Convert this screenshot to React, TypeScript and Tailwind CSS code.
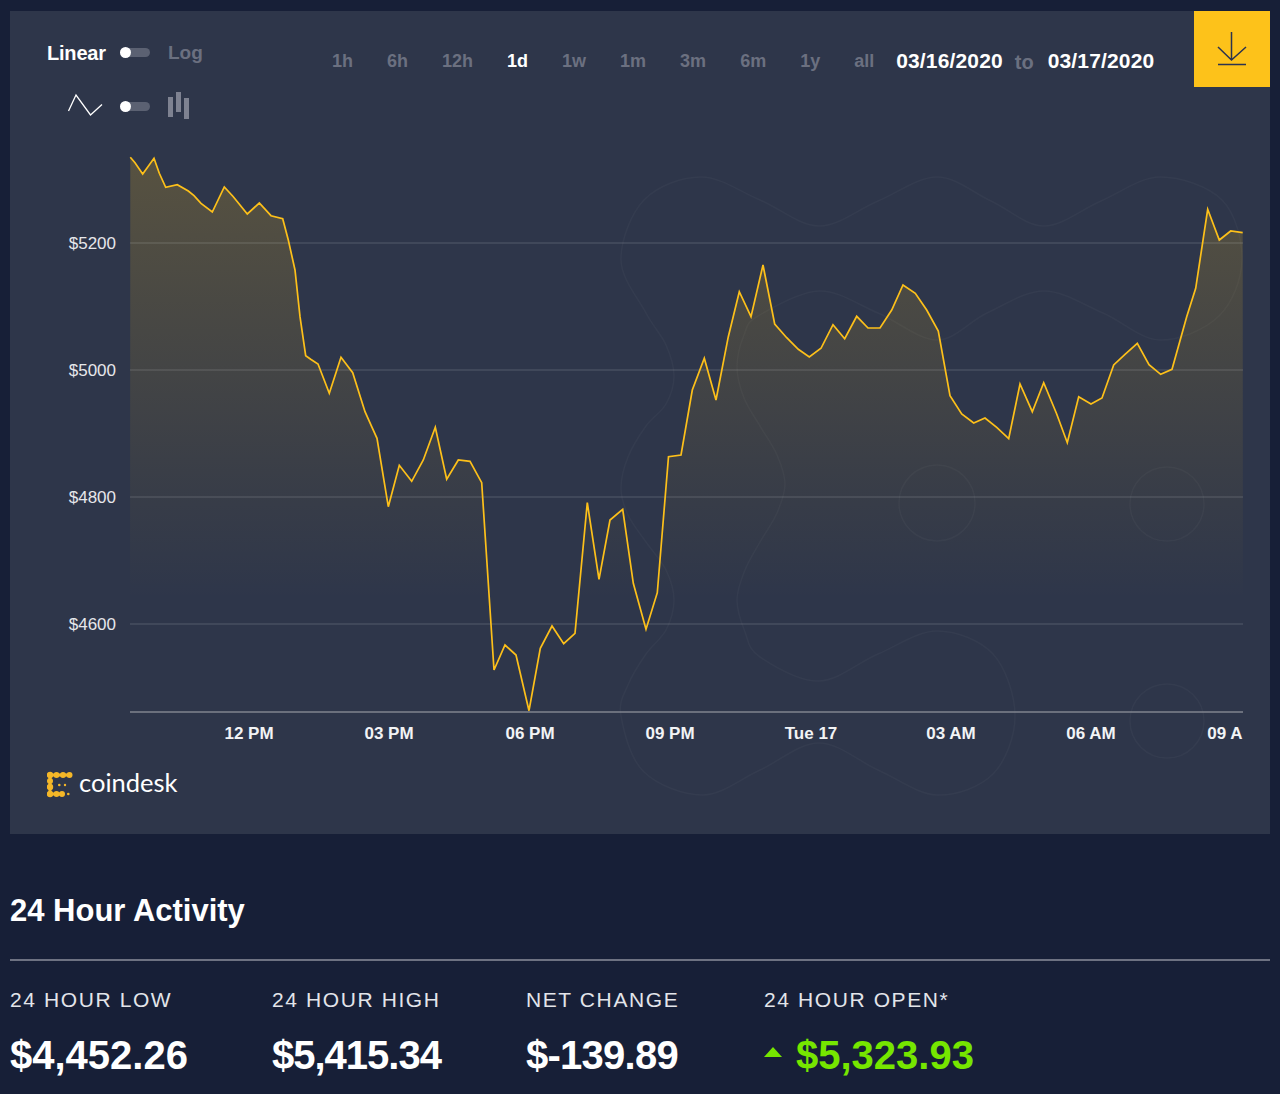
import React from "react";

const sans = "font-['Liberation_Sans',Arial,sans-serif]";

// price line, in page pixels (the svg viewBox starts at the page position of the chart)
const PRICE: [number, number][] = [
  [130.3, 157.3], [135, 162.7], [142.7, 174], [154, 158.3], [159.3, 173.3], [165.7, 187.3], [177.3, 184.7],
  [188.3, 191], [194, 195.7], [201, 203.3], [212.3, 212], [224.3, 187], [233.3, 196.7], [247.3, 214],
  [259.3, 203], [271, 215.7], [282.7, 218.7], [288.3, 240], [295, 270], [300, 316.7], [305.7, 355.7],
  [310.7, 359.3], [318, 364], [329.3, 393.3], [341, 357.3], [352.7, 372.7], [365, 411.7], [371.7, 426.7],
  [377, 438.3], [388.3, 506.7], [399.3, 465.3], [411.7, 481.3], [423.3, 460], [435.3, 427.3], [446.7, 479.3],
  [458.3, 460], [470, 461.3], [481.7, 482.7], [494, 670], [505, 645], [516, 655], [529, 710.7], [540.3, 648.3],
  [552, 626], [563.7, 643.7], [575, 633.3], [587.3, 502.7], [599, 579.3], [610, 520], [622.7, 509.3],
  [633.3, 583.3], [646, 629.3], [657.3, 592.7], [668.5, 456.7], [681, 455], [692.3, 390], [704.3, 358.3],
  [716, 400], [728.3, 336.7], [739.3, 291.7], [751, 316.7], [763, 265], [774.7, 324], [786.7, 337.7],
  [798.3, 349.3], [809.3, 357], [821, 348.3], [833, 324.7], [844.7, 338.7], [856.7, 316.3], [868, 328],
  [880, 328], [891.7, 310], [903, 285], [915.3, 293.3], [926.7, 310], [938.3, 331], [950, 395.7],
  [961.7, 414], [973.7, 423], [985, 418], [996.7, 427.3], [1008.7, 438.7], [1020, 384], [1032.3, 411.7],
  [1043.7, 382.7], [1056.7, 414], [1067.3, 442.7], [1078.7, 396.7], [1091, 404], [1102, 398], [1113.7, 365],
  [1125, 354.3], [1137.3, 343.3], [1149, 364.7], [1160.7, 374.3], [1172, 369.3], [1186.7, 316.7],
  [1195.7, 288.3], [1207.7, 209.3], [1219.3, 240], [1230.7, 231], [1242.7, 232.7],
];

// outline of the faint blobs behind the chart
const BLOB: [number, number][] = [
  [621, 260], [644, 200], [701, 177], [760, 200], [819, 226], [878, 201], [937, 177], [991, 201], [1044, 226],
  [1101, 201], [1160, 177], [1222, 200], [1242, 260], [1219, 316], [1160, 340], [1103, 313], [1044, 291],
  [987, 313], [937, 340], [878, 313], [819, 291], [758, 316], [744, 335], [737, 367], [744, 398], [760, 426],
  [777, 455], [785, 484], [777, 513], [760, 542], [745, 570], [737, 600], [745, 632], [760, 657], [819, 681],
  [878, 654], [937, 631], [993, 654], [1015, 716], [993, 774], [937, 795], [878, 770], [819, 743], [760, 770],
  [703, 795], [644, 772], [621, 716], [628, 685], [646, 654], [666, 630], [674, 600], [666, 570], [646, 542],
  [628, 515], [621, 488], [628, 457], [646, 426], [666, 404], [674, 376], [666, 345], [646, 313],
];

const RANGES = ["1h", "6h", "12h", "1d", "1w", "1m", "3m", "6m", "1y", "all"];
const GRID = [
  { y: 243, label: "$5200" },
  { y: 370, label: "$5000" },
  { y: 497, label: "$4800" },
  { y: 624, label: "$4600" },
];
const TIMES = [
  { x: 249, label: "12 PM" },
  { x: 389, label: "03 PM" },
  { x: 530, label: "06 PM" },
  { x: 670, label: "09 PM" },
  { x: 811, label: "Tue 17" },
  { x: 951, label: "03 AM" },
  { x: 1091, label: "06 AM" },
  { x: 1225, label: "09 A" },
];
const STATS = [
  { label: "24 HOUR LOW", value: "$4,452.26", track: "" },
  { label: "24 HOUR HIGH", value: "$5,415.34", track: "tracking-[-1px]" },
  { label: "NET CHANGE", value: "$-139.89", track: "tracking-[-0.75px]" },
];

function smoothLoop(pts: [number, number][]) {
  const n = pts.length;
  let d = `M${pts[0][0]} ${pts[0][1]}`;
  for (let i = 0; i < n; i++) {
    const p0 = pts[(i - 1 + n) % n];
    const p1 = pts[i];
    const p2 = pts[(i + 1) % n];
    const p3 = pts[(i + 2) % n];
    const c1x = p1[0] + (p2[0] - p0[0]) / 6;
    const c1y = p1[1] + (p2[1] - p0[1]) / 6;
    const c2x = p2[0] - (p3[0] - p1[0]) / 6;
    const c2y = p2[1] - (p3[1] - p1[1]) / 6;
    d += `C${c1x} ${c1y} ${c2x} ${c2y} ${p2[0]} ${p2[1]}`;
  }
  return d + "Z";
}

function Toggle({ className = "" }: { className?: string }) {
  return (
    <div className={`relative w-[30px] h-[9px] ${className}`}>
      <div className="ml-[3px] h-[9px] rounded-full bg-[#5b6172]" />
      <div className="absolute left-0 top-[-1px] w-[11px] h-[11px] rounded-full bg-white" />
    </div>
  );
}

function Chart() {
  const line = PRICE.map((p) => p.join(",")).join(" ");
  const area = `130,712 ${line} 1243,712`;
  return (
    <svg className="block w-[1260px] h-[703px]" viewBox="10 131 1260 703" fill="none">
      <defs>
        <linearGradient id="priceFill" gradientUnits="userSpaceOnUse" x1="0" y1="157" x2="0" y2="600">
          <stop offset="0" stopColor="#fdc21a" stopOpacity="0.2" />
          <stop offset="1" stopColor="#fdc21a" stopOpacity="0" />
        </linearGradient>
      </defs>
      <path d={smoothLoop(BLOB)} stroke="#ffffff" strokeOpacity="0.03" strokeWidth="1.5" />
      <circle cx="937" cy="503" r="38" stroke="#ffffff" strokeOpacity="0.03" strokeWidth="1.5" />
      <circle cx="1167" cy="504" r="37" stroke="#ffffff" strokeOpacity="0.03" strokeWidth="1.5" />
      <circle cx="1167" cy="721" r="37" stroke="#ffffff" strokeOpacity="0.03" strokeWidth="1.5" />
      <polygon points={area} fill="url(#priceFill)" />
      {GRID.map((g) => (
        <g key={g.y}>
          <line x1="130" x2="1243" y1={g.y} y2={g.y} stroke="#ffffff" strokeOpacity="0.12" strokeWidth="1.5" />
          <text x="116" y={g.y + 6} textAnchor="end" className={`${sans} text-[17px] fill-[#e6e7ea]`}>
            {g.label}
          </text>
        </g>
      ))}
      <line x1="130" x2="1243" y1="712" y2="712" stroke="#81848f" strokeWidth="1.5" />
      <polyline points={line} stroke="#fdc01a" strokeWidth="1.7" strokeLinejoin="miter" />
      {TIMES.map((t) => (
        <text key={t.label} x={t.x} y="739" textAnchor="middle" className={`${sans} text-[17px] font-bold fill-[#f2f3f5]`}>
          {t.label}
        </text>
      ))}
    </svg>
  );
}

function Logo() {
  return (
    <div className="absolute left-[37px] bottom-[36px] flex items-center gap-[6px]">
      <svg className="w-[26px] h-[28px]" viewBox="0 0 26 28" fill="#f4b728">
        <path d="M3 5H22.5M3 5V24M3 24H15" stroke="#f4b728" strokeWidth="3" />
        <circle cx="3" cy="5" r="3.2" />
        <circle cx="9.5" cy="5" r="3" />
        <circle cx="16" cy="5" r="3" />
        <circle cx="22.5" cy="5" r="3" />
        <circle cx="3" cy="11" r="3" />
        <circle cx="3" cy="17" r="3.2" />
        <circle cx="3" cy="24" r="3.2" />
        <circle cx="9.5" cy="24" r="3" />
        <circle cx="15" cy="24" r="3" />
        <circle cx="12.3" cy="15" r="1.3" />
        <circle cx="18" cy="15" r="1.2" />
        <circle cx="21.3" cy="24" r="1.3" />
      </svg>
      <span className="mb-[3px] font-['Lato',sans-serif] text-[25.5px] leading-none font-normal text-white">coindesk</span>
    </div>
  );
}

export default function App() {
  return (
    <div className={`${sans} w-[1280px] h-[1094px] bg-[#171f37] px-[10px] pt-[11px] overflow-hidden`}>
      {/* Chart panel */}
      <div className="relative h-[823px] bg-[#2e364a]">
        <div className="flex items-start h-[120px]">
          <div className="w-[312px] pl-[37px] pt-[31px]">
            <div className="flex items-center h-[22px]">
              <span className="w-[73px] text-[20px] font-bold text-white tracking-[-0.2px]">Linear</span>
              <Toggle className="mb-[2px]" />
              <span className="ml-[18px] text-[19px] font-bold text-[#6b7080]">Log</span>
            </div>
            <div className="flex items-center mt-[28px] h-[28px]">
              <svg className="w-[73px] h-[28px]" viewBox="0 0 73 28" fill="none">
                <path d="M21.5 19L29 3L43.5 23L55 12.5" stroke="#ffffff" strokeWidth="1.3" />
              </svg>
              <Toggle />
              <svg className="ml-[18px] w-[21px] h-[28px]" viewBox="0 0 21 28" fill="#7e8291">
                <rect x="0" y="5" width="5" height="20" />
                <rect x="8" y="0" width="5" height="20" />
                <rect x="16" y="6" width="5" height="21" />
              </svg>
            </div>
          </div>

          <div className="flex items-center pt-[34px] pl-[10px]">
            <div className="flex items-center gap-[34px] text-[18px] font-bold text-[#6b7080]">
              {RANGES.map((r) => (
                <span key={r} className={r === "1d" ? "text-white" : ""}>
                  {r}
                </span>
              ))}
            </div>
            <span className="ml-[22px] mb-[2px] text-[21px] tracking-[0.15px] font-bold text-white">03/16/2020</span>
            <span className="ml-[12px] text-[20px] font-bold text-[#6b7080]">to</span>
            <span className="ml-[14px] mb-[2px] text-[21px] tracking-[0.15px] font-bold text-white">03/17/2020</span>
          </div>

          <button className="ml-auto flex items-center justify-center w-[76px] h-[76px] bg-[#fdc21a]">
            <svg className="w-[30px] h-[34px]" viewBox="0 0 30 34" fill="none" stroke="#2b3350" strokeWidth="1.5">
              <path d="M14.5 0V28M1 15L14.5 28L29 15M1 32.5H29" />
            </svg>
          </button>
        </div>
        <Chart />
        <Logo />
      </div>

      {/* 24 hour activity */}
      <h2 className="mt-[58px] h-[37px] text-[31px] leading-[37px] font-bold text-white">24 Hour Activity</h2>
      <div className="mt-[30px] h-[2px] bg-[#6e7282]" />
      <div className="grid grid-cols-[262px_254px_238px_1fr] mt-[27px]">
        {STATS.map((s) => (
          <div key={s.label}>
            <div className="text-[21px] leading-[24px] tracking-[1.6px] text-[#e3e5ea]">{s.label}</div>
            <div className={`mt-[21px] text-[40px] leading-[44px] font-bold text-white ${s.track}`}>{s.value}</div>
          </div>
        ))}
        <div>
          <div className="text-[21px] leading-[24px] tracking-[1.6px] text-[#e3e5ea]">24 HOUR OPEN*</div>
          <div className="mt-[21px] flex items-center gap-[14px] text-[40px] leading-[44px] font-bold text-[#76e600]">
            <span className="w-0 h-0 mb-[6px] border-x-[9px] border-x-transparent border-b-[10px] border-b-[#76e600]" />
            $5,323.93
          </div>
        </div>
      </div>
    </div>
  );
}
